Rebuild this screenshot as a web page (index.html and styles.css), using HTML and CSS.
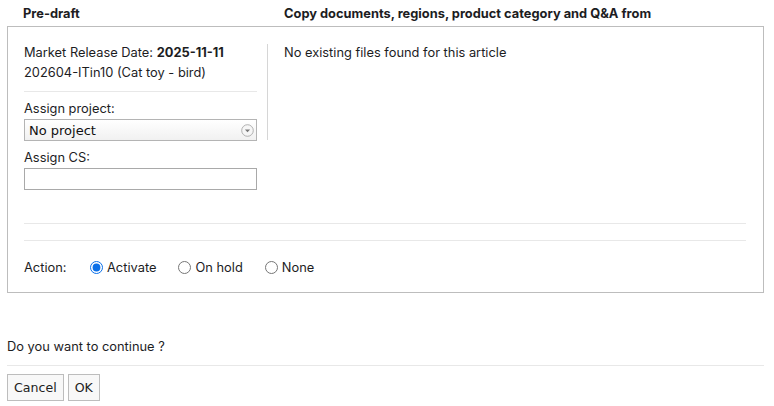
FILE: index.html
```html
<!DOCTYPE html>
<html lang="en">
<head>
<meta charset="utf-8">
<title>Pre-draft</title>
<link rel="stylesheet" href="styles.css">
</head>
<body>
<div class="page">
  <div class="heads">
    <div class="head head-left">Pre-draft</div>
    <div class="head head-right">Copy documents, regions, product category and Q&amp;A from</div>
  </div>

  <div class="panel">
    <div class="cols">
      <div class="col-left">
        <div class="line">Market Release Date: <b>2025-11-11</b></div>
        <div class="line">202604-ITin10 (Cat toy - bird)</div>
        <hr class="sep sep-short">
        <label class="field-label">Assign project:</label>
        <div class="select">
          <span class="select-text">No project</span>
          <svg class="select-icon" width="13" height="13" viewBox="0 0 13 13">
            <circle cx="6.5" cy="6.5" r="5.8" fill="#f6f6f6" stroke="#a8a8a8" stroke-width="0.9"/>
            <path d="M3.9 5.4 H9.1 L6.5 8.2 Z" fill="#777"/>
          </svg>
        </div>
        <label class="field-label field-gap">Assign CS:</label>
        <input class="text-input" type="text">
      </div>
      <div class="col-right">
        <div class="line">No existing files found for this article</div>
      </div>
    </div>

    <hr class="sep sep-wide">
    <hr class="sep sep-wide sep-second">

    <div class="action">
      <span class="action-label">Action:</span>
      <label class="radio"><input type="radio" name="action" checked> Activate</label>
      <label class="radio"><input type="radio" name="action"> On hold</label>
      <label class="radio"><input type="radio" name="action"> None</label>
    </div>
  </div>

  <div class="question">Do you want to continue ?</div>
  <hr class="sep sep-full">
  <div class="buttons">
    <button class="btn">Cancel</button>
    <button class="btn">OK</button>
  </div>
</div>
</body>
</html>
```

FILE: styles.css
```css
html, body {
  margin: 0;
  padding: 0;
  background: #fff;
}

body {
  font-family: Inter, "Noto Sans", sans-serif;
  font-size: 12.85px;
  color: #1d1d1f;
}

.page {
  padding: 0 10px 0 7px;
}

.heads {
  display: flex;
  height: 26px;
  align-items: center;
  font-weight: 700;
}

.head-left {
  width: 261px;
  padding-left: 16px;
}

.panel {
  border: 1px solid #bdbdbd;
  padding: 16px 16px 15px 16px;
}

.cols {
  display: flex;
  align-items: flex-start;
  padding-bottom: 33px;
}

.col-left {
  width: 233px;
  margin-right: 10px;
  display: flex;
  flex-direction: column;
}

/* vertical rule runs alongside the date and project fields only */
.col-right {
  height: 96px;
  margin-top: 1px;
  padding-left: 16px;
  border-left: 1px solid #d6d6d6;
}

.col-right .line {
  margin-top: -1px;
}

.line {
  line-height: 20px;
}

.sep {
  border: 0;
  border-top: 1px solid #e8e8e8;
  margin: 0;
}

.sep-short {
  margin: 8px 0 7px;
  width: 233px;
}

.field-label {
  line-height: 20px;
  display: block;
}

.field-gap {
  margin-top: 7px;
}

.select {
  box-sizing: border-box;
  width: 233px;
  height: 22px;
  border: 1px solid #b4b4b4;
  background: linear-gradient(#ffffff, #f1f1f1);
  display: flex;
  align-items: center;
  justify-content: space-between;
  padding: 0 2px 0 4px;
  font-family: "DejaVu Sans", sans-serif;
  font-size: 13px;
  color: #111;
}

.select-icon {
  display: block;
}

.text-input {
  box-sizing: border-box;
  width: 233px;
  height: 22px;
  margin: 0;
  border: 1px solid #a9a9a9;
  background: #fff;
  outline: none;
}

.sep-wide {
  width: 722px;
}

.sep-second {
  margin-top: 16px;
}

.action {
  display: flex;
  align-items: center;
  height: 20px;
  margin-top: 16px;
}

.action-label {
  width: 64px;
}

.radio {
  display: flex;
  align-items: center;
  margin-right: 20px;
}

.radio input {
  margin: 0 4px 0 2px;
  width: 13px;
  height: 13px;
  accent-color: #0a6fe8;
}

.question {
  margin-top: 44px;
  line-height: 20px;
}

.sep-full {
  margin-top: 8px;
}

.buttons {
  display: flex;
  gap: 4px;
  margin-top: 8px;
}

.btn {
  height: 27px;
  padding: 0 6px;
  border: 1px solid #bdbdbd;
  background: #f8f8f8;
  font-family: "DejaVu Sans", sans-serif;
  font-size: 12.6px;
  color: #222;
  border-radius: 0;
}
```
